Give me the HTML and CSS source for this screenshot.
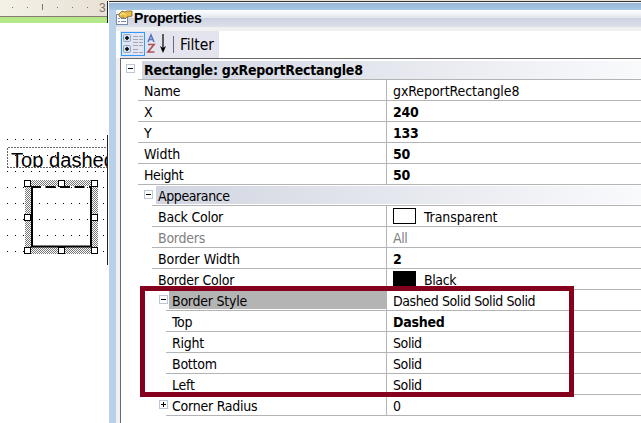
FILE: index.html
```html
<!DOCTYPE html>
<html lang="en">
<head>
<meta charset="utf-8">
<title>Properties</title>
<link rel="stylesheet" href="styles.css">
</head>
<body>
<main class="app">
  <section class="designer">
    <header class="ruler">
      <svg width="107" height="23" viewBox="0 0 107 23"><g fill="#82736a"><rect x="12" y="7" width="1" height="1"/><rect x="27" y="7" width="1" height="1"/><rect x="42" y="4" width="1" height="6"/><rect x="57" y="7" width="1" height="1"/><rect x="72" y="7" width="1" height="1"/><rect x="87" y="7" width="1" height="1"/></g><text x="99" y="12" class="ruler-number">3</text></svg>
    </header>
    <svg class="canvas" width="107" height="400" viewBox="0 23 107 400">
      <defs>
        <pattern id="dots" x="7" y="139" width="8" height="16" patternUnits="userSpaceOnUse"><rect width="1" height="1" fill="#000"/></pattern>
        <pattern id="hatch" width="2" height="2" patternUnits="userSpaceOnUse"><rect width="1" height="1" fill="#777"/><rect x="1" y="1" width="1" height="1" fill="#777"/></pattern>
        <clipPath id="field"><rect x="7" y="147" width="100" height="20"/></clipPath>
      </defs>
      <rect x="0" y="139" width="107" height="115" fill="url(#dots)"/>
      <path d="M7.500 168V147.500H107M7 167.500H107" fill="none" stroke="#666" stroke-dasharray="2 1"/>
      <text x="11" y="166.500" class="canvas-label" textLength="104" lengthAdjust="spacingAndGlyphs" clip-path="url(#field)">Top dashed</text>
      <path d="M25 180H98V254H25ZM31 186V247H92V186Z" fill="url(#hatch)" fill-rule="evenodd"/>
      <path d="M32 187V246.500H91V187" fill="none" stroke="#000" stroke-width="2"/>
      <path d="M31 187H92" stroke="#000" stroke-width="2" stroke-dasharray="10 4.500"/>
      <g fill="#fff" stroke="#000"><rect x="24.500" y="180.500" width="6" height="6"/><rect x="58.500" y="180.500" width="6" height="6"/><rect x="91.500" y="180.500" width="6" height="6"/><rect x="24.500" y="214.500" width="6" height="6"/><rect x="91.500" y="214.500" width="6" height="6"/><rect x="24.500" y="247.500" width="6" height="6"/><rect x="58.500" y="247.500" width="6" height="6"/><rect x="91.500" y="247.500" width="6" height="6"/></g>
    </svg>
  </section>
  <div class="edge"></div>
  <section class="window">
    <div class="glass"></div>
    <div class="frame">
      <header class="title">
        <svg width="17" height="16" viewBox="0 0 17 16"><rect x=".5" y="4.500" width="11" height="10" fill="#fff" stroke="#7789a8"/><path d="M2 8.500H4M5 8.500H10M2 11.500H4M5 11.500H10" stroke="#7789a8"/><path d="M3 4L6 1L9 2L11 1H16V6L11 7L9 9L7 7L5 8L3 6Z" fill="#e8bd45" stroke="#665020" stroke-width=".7"/><path d="M4 5L7 3L10 5" stroke="#fff0a0" fill="none"/></svg>
        <span>Properties</span>
      </header>
      <div class="toolbar">
        <div class="tools">
          <svg width="48" height="26" viewBox="0 0 48 26"><rect x=".5" y=".5" width="23" height="23" fill="#e1e6f2" stroke="#3399ff"/><g fill="#cfdff0" stroke="#91a6c0"><rect x="2.500" y="2.500" width="7" height="7" rx="1"/><rect x="2.500" y="13.500" width="7" height="7" rx="1"/></g><path d="M4 6H8M6 4V8M4 17H8M6 15V19" stroke="#000" stroke-width="1.500"/><path d="M12 4.500H17M18 4.500H22M12 7.500H17M18 7.500H22M12 10.500H17M18 10.500H22M12 13.500H17M18 13.500H22M12 17.500H17M12 20.500H17M18 20.500H22" stroke="#a4a7b3"/><path d="M27 10L30 3L33 10M28.500 7.500H31.500" fill="none" stroke="#5275bd" stroke-width="1.500"/><path d="M27 12.500H33L27 20H33.500" fill="none" stroke="#ad5058" stroke-width="1.700"/><path d="M42 2V16" stroke="#000" stroke-width="1.200"/><path d="M39 14L42 16L45 14L42 21Z"/></svg>
          <i class="divider"></i><span class="filter">Filter</span>
        </div>
      </div>
      <div class="grid">
        <div class="group g0"><i class="box"></i><div class="band bold"><span>Rectangle: gxReportRectangle8</span></div></div>
        <div class="row l0"><div class="name"><span>Name</span></div><div class="value"><span class="open">gxReportRectangle8</span></div></div>
        <div class="row l0"><div class="name"><span>X</span></div><div class="value bold"><span>240</span></div></div>
        <div class="row l0"><div class="name"><span>Y</span></div><div class="value bold"><span>133</span></div></div>
        <div class="row l0"><div class="name"><span class="open">Width</span></div><div class="value bold"><span>50</span></div></div>
        <div class="row l0"><div class="name"><span class="tight">Height</span></div><div class="value bold"><span>50</span></div></div>
        <div class="group g1"><i class="box"></i><div class="band"><span class="tight">Appearance</span></div></div>
        <div class="row l1"><div class="name"><span>Back Color</span></div><div class="value"><i class="swatch"></i><span class="open">Transparent</span></div></div>
        <div class="row l1 muted"><div class="name"><span>Borders</span></div><div class="value"><span class="tight">All</span></div></div>
        <div class="row l1"><div class="name"><span class="open">Border Width</span></div><div class="value bold"><span>2</span></div></div>
        <div class="row l1"><div class="name"><span>Border Color</span></div><div class="value"><i class="swatch black"></i><span class="tight">Black</span></div></div>
        <div class="row l2 selected"><i class="box"></i><div class="name"><span>Border Style</span></div><div class="value"><span class="tight">Dashed Solid Solid Solid</span></div></div>
        <div class="row l2"><div class="name"><span>Top</span></div><div class="value bold"><span>Dashed</span></div></div>
        <div class="row l2"><div class="name"><span>Right</span></div><div class="value"><span class="tight">Solid</span></div></div>
        <div class="row l2"><div class="name"><span>Bottom</span></div><div class="value"><span class="tight">Solid</span></div></div>
        <div class="row l2"><div class="name"><span>Left</span></div><div class="value"><span class="tight">Solid</span></div></div>
        <div class="row l2"><i class="box plus"></i><div class="name"><span>Corner Radius</span></div><div class="value"><span>0</span></div></div>
        <div class="highlight"></div>
      </div>
    </div>
  </section>
</main>
</body>
</html>
```

FILE: styles.css
```css
* { box-sizing: border-box; }
body { margin: 0; background: #fff; overflow: hidden; }
svg { display: block; flex: none; }
.app { display: flex; width: 641px; height: 423px; background: linear-gradient(#e8e4d9 0 1px, #fff 1px); }
.designer { width: 107px; }
.ruler { height: 23px; background: linear-gradient(90deg, #f4f1e7, #e8e1d5) 0 0 / 100% 16px no-repeat, linear-gradient(#897b70 0 0) 0 16px / 100% 1px no-repeat, #b5e889; }
.ruler-number { font: 12px "Liberation Sans", sans-serif; fill: #82736a; }
.canvas-label { font: 19.500px "Liberation Sans", sans-serif; }
.edge { width: 2px; margin-top: 1px; background: linear-gradient(#222 0 0) 0 0 / 1px 22px no-repeat, linear-gradient(#222 0 0) 0 134px / 1px 130px no-repeat, #fff; }
.window { width: 532px; margin-top: 1px; border-top: 1px solid #333; background: #b9d0e9; }
.glass { height: 8px; border-top: 1px solid #edf3f8; background: linear-gradient(#97b5d5, #a9c8e5); }
.frame { height: 413px; margin-left: 7px; background: #f0f0f0; }
.title { height: 17px; display: flex; background: linear-gradient(#fff, #e1e5ed 8px, #cdd3e0 8px, #dce0eb 17px); font: bold 14px/17px "Liberation Sans", sans-serif; letter-spacing: -.15px; }
.title span { margin-left: 1px; }
.toolbar { height: 31px; padding: 4px 0 0 4px; background: linear-gradient(#f0f0f0 4px, #fff 4px); }
.tools { width: 99px; height: 27px; display: flex; padding: 1px; background: #e4e4ef; }
.divider { width: 1px; height: 17px; margin: 4px 0 0 4px; background: #686887; }
.filter { margin-left: 6px; font: 15.500px/26px "DejaVu Sans Condensed", "DejaVu Sans", sans-serif; font-stretch: condensed; letter-spacing: -.1px; }
.grid { position: relative; height: 365px; margin-left: 4px; padding-top: 1px; border-left: 1px solid #696969; border-top: 1px solid #696969; background: #fff; font: 14px/23px "DejaVu Sans Condensed", "DejaVu Sans", sans-serif; font-stretch: condensed; letter-spacing: -.24px; white-space: nowrap; }
.open { letter-spacing: -.08px; }
.tight { letter-spacing: -.4px; }
.group, .row { position: relative; height: 21px; display: flex; border-bottom: 1px solid #b4b4b4; }
.group { align-items: center; }
.g0 { height: 20px; margin-left: 17px; }
.g1 { margin-left: 17px; border-color: transparent; background: linear-gradient(#b4b4b4 0 0) 14px 20px / 100% 1px no-repeat border-box; }
.band { flex: 1; height: 18px; padding-left: 2px; background: linear-gradient(90deg, #d1d5e0, #f9fafc); line-height: 19px; }
.g0 .band { margin-left: 4px; }
.g1 .band { margin-left: 18px; line-height: 21px; }
.box { position: absolute; width: 9px; height: 9px; border: 1px solid #bdc6d5; background: linear-gradient(#000 0 0) center / 5px 1px no-repeat, #fff; }
.plus { background: linear-gradient(#000 0 0) center / 5px 1px no-repeat, linear-gradient(#000 0 0) center / 1px 5px no-repeat, #fff; }
.g0 .box { left: -12px; top: 4px; }
.g1 .box { left: 6px; top: 5px; }
.row .box { left: -7px; top: 5px; }
.l0 { margin-left: 17px; }
.l1 { margin-left: 31px; }
.l2 { margin-left: 45px; }
.name { width: 248px; padding-left: 6px; }
.l1 .name { width: 234px; }
.l2 .name { width: 220px; }
.value { display: flex; flex: 1; padding-left: 6px; border-left: 1px solid #b4b4b4; }
.bold { font-weight: bold; }
.muted { color: #808080; }
.swatch { width: 23px; height: 16px; margin: 2px 8px 0 0; border: 1px solid #000; }
.black { background: #000; }
.selected .name { width: 217px; height: 19px; margin-left: 3px; padding-left: 3px; background: #b4b4b4; }
.highlight { position: absolute; left: 19px; top: 227px; width: 434px; height: 111px; border: 5px solid #85001c; }
```
